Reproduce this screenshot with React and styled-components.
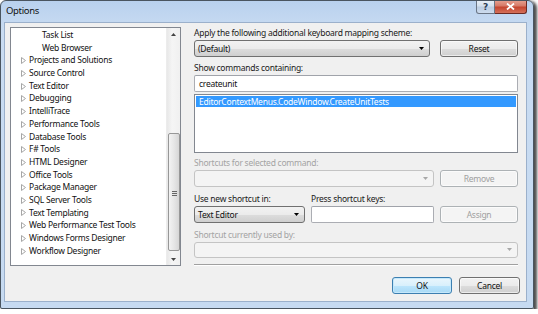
import React from 'react'
import styled, { createGlobalStyle } from 'styled-components'

const GlobalStyle = createGlobalStyle`
  html, body {
    margin: 0;
    padding: 0;
    background: #ffffff;
  }
  body {
    font-family: "Noto Sans", "Open Sans", sans-serif;
    font-size: 8.5px;
    letter-spacing: -0.25px;
    color: #000;
  }
`

const Window = styled.div`
  width: 534px;
  height: 309px;
  border: 1px solid #4a5560;
  border-radius: 6px 6px 2px 2px;
  background: linear-gradient(#b9d1ee, #c9dcf2 30px, #c6daf1);
  box-shadow: 2px 2px 3px 1px rgba(0, 0, 0, 0.7);
  display: flex;
  flex-direction: column;
  box-sizing: border-box;
  overflow: hidden;
`

const TitleBar = styled.div`
  height: 21px;
  display: flex;
  align-items: flex-start;
  flex-shrink: 0;
`

const Title = styled.div`
  padding: 3px 0 0 5px;
  font-size: 9.5px;
  letter-spacing: -0.35px;
  line-height: 14px;
  color: #111;
  flex: 1;
`

const CaptionButtons = styled.div`
  display: flex;
  margin-right: 6px;
  margin-top: -1px;
`

const CaptionButton = styled.div`
  width: ${p => p.$w}px;
  height: 14px;
  box-sizing: border-box;
  border: 1px solid ${p => (p.$close ? '#6b2a24' : '#6a7585')};
  border-top: none;
  border-radius: ${p => (p.$close ? '0 0 3px 0' : '0 0 0 3px')};
  border-left: ${p => (p.$close ? 'none' : '')};
  background: ${p =>
    p.$close
      ? 'linear-gradient(#e8a393, #d67a68 45%, #c5452f 55%, #d4705a)'
      : 'linear-gradient(#e9f0f8, #d5e1ee 45%, #bccde2 55%, #cddcee)'};
  display: flex;
  align-items: center;
  justify-content: center;
  color: ${p => (p.$close ? '#fff' : '#2e3f55')};
  font-size: 9px;
  font-weight: bold;
  font-family: "DejaVu Sans", sans-serif;
`

const Content = styled.div`
  flex: 1;
  margin: 0 6px 6px 3px;
  background: #f0f0f0;
  border: 1px solid #9bb0cb;
  display: flex;
  flex-direction: column;
  padding: 4px 8px 0 5px;
`

const Main = styled.div`
  display: flex;
  gap: 13px;
`

const Tree = styled.div`
  width: 171px;
  height: 239px;
  box-sizing: border-box;
  border: 1px solid #828790;
  background: #fff;
  display: flex;
  flex-shrink: 0;
`

const TreeList = styled.div`
  flex: 1;
  padding-top: 1px;
`

const TreeRow = styled.div`
  height: 12.7px;
  line-height: 12.7px;
  display: flex;
  align-items: center;
  padding-left: ${p => (p.$child ? 31 : 10)}px;
  white-space: nowrap;
  color: #111;
`

const Expander = styled.svg`
  width: 5px;
  height: 7px;
  margin-right: 3px;
  flex-shrink: 0;
`

const ScrollBar = styled.div`
  width: 13px;
  background: linear-gradient(90deg, #e8e8e8, #f5f5f5 40%, #f0f0f0);
  border-left: 1px solid #ececec;
  display: flex;
  flex-direction: column;
`

const ScrollArrow = styled.div`
  height: 12px;
  display: flex;
  align-items: center;
  justify-content: center;
`

const ScrollTrack = styled.div`
  flex: 1;
  display: flex;
  flex-direction: column;
  padding: 93px 0 2px 0;
`

const Thumb = styled.div`
  flex: 1;
  margin: 0 0 0 1px;
  border: 1px solid #979797;
  border-radius: 2px;
  background: linear-gradient(90deg, #f3f3f3, #e6e6e6 50%, #d6d6d6);
  display: flex;
  align-items: center;
  justify-content: center;
`

const Grip = styled.div`
  width: 5px;
  height: 5px;
  background: repeating-linear-gradient(#666 0 1px, transparent 1px 2px);
  margin-top: 2px;
`

const Pane = styled.div`
  flex: 1;
  display: flex;
  flex-direction: column;
`

const Label = styled.div`
  height: 12px;
  line-height: 12px;
  width: ${p => (p.$w ? `${p.$w}px` : 'auto')};
  margin-top: ${p => p.$mt || 0}px;
  margin-bottom: 1px;
  color: ${p => (p.$disabled ? '#a3a3a3' : '#1a1a1a')};
  white-space: nowrap;
`

const Row = styled.div`
  display: flex;
  gap: ${p => p.$gap || 10}px;
  align-items: flex-start;
`

const Combo = styled.div`
  width: ${p => (p.$w ? `${p.$w}px` : 'auto')};
  flex: ${p => (p.$w ? 'none' : '1')};
  height: 17px;
  box-sizing: border-box;
  border: 1px solid ${p => (p.$disabled ? '#c4c4c4' : '#707070')};
  border-radius: 3px;
  background: ${p =>
    p.$disabled
      ? '#f4f4f4'
      : 'linear-gradient(#f2f2f2, #ebebeb 50%, #dddddd 50%, #cfcfcf)'};
  display: flex;
  align-items: center;
  padding: 0 5px 0 3px;
  color: #111;
`

const ComboText = styled.span`
  flex: 1;
`

const Arrow = styled.svg`
  width: 5px;
  height: 3px;
`

const Button = styled.div`
  width: ${p => p.$w || 78}px;
  height: 17px;
  box-sizing: border-box;
  border: 1px solid ${p => (p.$disabled ? '#adb2b5' : p.$default ? '#3c7fb1' : '#707070')};
  border-radius: 3px;
  background: ${p =>
    p.$disabled
      ? '#f4f4f4'
      : p.$default
        ? 'linear-gradient(#eaf6fd, #d9f0fc 50%, #bee6fd 50%, #a7d9f5)'
        : 'linear-gradient(#f2f2f2, #ebebeb 50%, #dddddd 50%, #cfcfcf)'};
  box-shadow: ${p => (p.$default ? 'inset 0 0 0 1px #c5e8fb' : 'inset 0 0 0 1px rgba(255,255,255,0.6)')};
  color: ${p => (p.$disabled ? '#a0a0a0' : '#111')};
  display: flex;
  align-items: center;
  justify-content: center;
  flex-shrink: 0;
`

const TextBox = styled.div`
  width: ${p => (p.$w ? `${p.$w}px` : 'auto')};
  flex: ${p => (p.$w ? 'none' : '1')};
  height: 17px;
  box-sizing: border-box;
  border: 1px solid #abadb3;
  border-top-color: #a0a3aa;
  border-radius: 2px;
  background: #fff;
  display: flex;
  align-items: center;
  padding: 0 4px;
  color: #111;
`

const ListBox = styled.div`
  height: 59px;
  margin-top: 2px;
  box-sizing: border-box;
  border: 1px solid #828790;
  background: #fff;
  padding: 1px;
`

const ListItem = styled.div`
  height: 11px;
  line-height: 11px;
  padding-left: 3px;
  background: ${p => (p.$selected ? '#3399ff' : 'transparent')};
  color: ${p => (p.$selected ? '#fff' : '#111')};
`

const Separator = styled.div`
  height: 0;
  margin-top: 6px;
  border-top: 1px solid #a0a0a0;
  border-bottom: 1px solid #fff;
`

const Footer = styled.div`
  display: flex;
  justify-content: flex-end;
  gap: 7px;
  margin-top: 11px;
  margin-right: -2px;
`

const treeItems = [
  { label: 'Task List', child: true },
  { label: 'Web Browser', child: true },
  { label: 'Projects and Solutions' },
  { label: 'Source Control' },
  { label: 'Text Editor' },
  { label: 'Debugging' },
  { label: 'IntelliTrace' },
  { label: 'Performance Tools' },
  { label: 'Database Tools' },
  { label: 'F# Tools' },
  { label: 'HTML Designer' },
  { label: 'Office Tools' },
  { label: 'Package Manager' },
  { label: 'SQL Server Tools' },
  { label: 'Text Templating' },
  { label: 'Web Performance Test Tools' },
  { label: 'Windows Forms Designer' },
  { label: 'Workflow Designer' }
]

const DownArrow = ({ disabled }) => (
  <Arrow viewBox="0 0 5 3">
    <path d="M0 0h5L2.5 3z" fill={disabled ? '#a8a8a8' : '#000'} />
  </Arrow>
)

const App = () => {
  return (
    <>
      <GlobalStyle />
      <Window>
        <TitleBar>
          <Title>Options</Title>
          <CaptionButtons>
            <CaptionButton $w={19}>?</CaptionButton>
            <CaptionButton $w={32} $close>
              <svg width="9" height="7" viewBox="0 0 9 7">
                <path d="M1 0.5l7 6M8 0.5l-7 6" stroke="#fff" strokeWidth="1.8" />
              </svg>
            </CaptionButton>
          </CaptionButtons>
        </TitleBar>
        <Content>
          <Main>
            <Tree>
              <TreeList>
                {treeItems.map(item => (
                  <TreeRow key={item.label} $child={item.child}>
                    {!item.child && (
                      <Expander viewBox="0 0 5 7">
                        <path d="M0.5 0.5L4.5 3.5L0.5 6.5Z" fill="#fff" stroke="#a6a6a6" strokeWidth="1" />
                      </Expander>
                    )}
                    {item.label}
                  </TreeRow>
                ))}
              </TreeList>
              <ScrollBar>
                <ScrollArrow>
                  <svg width="5" height="3" viewBox="0 0 5 3">
                    <path d="M0 3h5L2.5 0z" fill="#444" />
                  </svg>
                </ScrollArrow>
                <ScrollTrack>
                  <Thumb>
                    <Grip />
                  </Thumb>
                </ScrollTrack>
                <ScrollArrow>
                  <svg width="5" height="3" viewBox="0 0 5 3">
                    <path d="M0 0h5L2.5 3z" fill="#444" />
                  </svg>
                </ScrollArrow>
              </ScrollBar>
            </Tree>
            <Pane>
              <Label>Apply the following additional keyboard mapping scheme:</Label>
              <Row>
                <Combo $w={236}>
                  <ComboText>(Default)</ComboText>
                  <DownArrow />
                </Combo>
                <Button>Reset</Button>
              </Row>
              <Label $mt={5}>Show commands containing:</Label>
              <TextBox>createunit</TextBox>
              <ListBox>
                <ListItem $selected>EditorContextMenus.CodeWindow.CreateUnitTests</ListItem>
              </ListBox>
              <Label $mt={4} $disabled>Shortcuts for selected command:</Label>
              <Row $gap={6}>
                <Combo $w={240} $disabled>
                  <ComboText />
                  <DownArrow disabled />
                </Combo>
                <Button $disabled>Remove</Button>
              </Row>
              <Row $gap={6}>
                <Label $mt={6} $w={111}>Use new shortcut in:</Label>
                <Label $mt={6}>Press shortcut keys:</Label>
              </Row>
              <Row $gap={6}>
                <Combo $w={111}>
                  <ComboText>Text Editor</ComboText>
                  <DownArrow />
                </Combo>
                <TextBox $w={123} />
                <Button $disabled>Assign</Button>
              </Row>
              <Label $mt={6} $disabled>Shortcut currently used by:</Label>
              <Combo $disabled>
                <ComboText />
                <DownArrow disabled />
              </Combo>
              <Separator />
            </Pane>
          </Main>
          <Footer>
            <Button $w={60} $default>OK</Button>
            <Button $w={61}>Cancel</Button>
          </Footer>
        </Content>
      </Window>
    </>
  )
}

export default App
